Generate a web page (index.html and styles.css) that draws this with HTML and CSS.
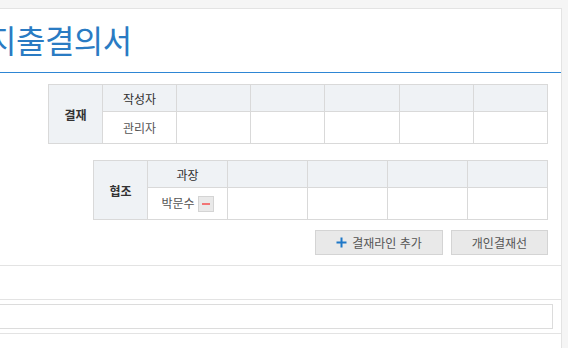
FILE: index.html
```html
<!DOCTYPE html>
<html lang="ko">

<head>
    <meta charset="UTF-8">
    <meta name="viewport" content="width=device-width, initial-scale=1.0">
    <title>지출결의서</title>
    <link rel="stylesheet" href="styles.css">
</head>

<body>

    <div class="page">
        <div class="panel">
            <div class="doc-head">
                <h1 class="doc-title">지출결의서</h1>
            </div>

            <!-- 결재 / 협조 라인 -->
            <div class="approval">
                <table class="sign-table sign-main">
                    <colgroup>
                        <col class="col-label">
                        <col span="6">
                    </colgroup>
                    <tr class="sign-head">
                        <th class="sign-label" rowspan="2">결재</th>
                        <th>작성자</th>
                        <th></th>
                        <th></th>
                        <th></th>
                        <th></th>
                        <th></th>
                    </tr>
                    <tr class="sign-body">
                        <td>관리자</td>
                        <td></td>
                        <td></td>
                        <td></td>
                        <td></td>
                        <td></td>
                    </tr>
                </table>

                <table class="sign-table sign-coop">
                    <colgroup>
                        <col class="col-label">
                        <col span="5">
                    </colgroup>
                    <tr class="sign-head">
                        <th class="sign-label" rowspan="2">협조</th>
                        <th>과장</th>
                        <th></th>
                        <th></th>
                        <th></th>
                        <th></th>
                    </tr>
                    <tr class="sign-body">
                        <td>박문수<button type="button" class="btn-remove" title="삭제"><span></span></button></td>
                        <td></td>
                        <td></td>
                        <td></td>
                        <td></td>
                    </tr>
                </table>

                <div class="sign-actions">
                    <button type="button" class="btn">
                        <svg class="icon-plus" width="11" height="11" viewBox="0 0 11 11">
                            <path d="M5.5 0.5v10M0.5 5.5h10" stroke="#1f78c8" stroke-width="2" fill="none"/>
                        </svg>
                        결재라인 추가
                    </button>
                    <button type="button" class="btn">개인결재선</button>
                </div>
            </div>

            <div class="form-row"></div>
            <div class="form-row form-row-field">
                <input type="text" class="field-input">
            </div>
            <div class="form-row"></div>
        </div>
    </div>

</body>

</html>
```

FILE: styles.css
```css
body {
    margin: 0;
    padding: 0;
    background-color: #f5f5f5;
    font-family: "Noto Sans CJK KR", "Noto Sans", sans-serif;
    font-size: 12px;
    color: #444;
}

.page {
    padding: 8px 6px 0 0;
    overflow: hidden;
}

.panel {
    margin-left: -60px;
    background-color: #fff;
    border: 1px solid #e3e3e3;
    border-bottom: none;
    height: 400px;
}

.doc-head {
    height: 63px;
    border-bottom: 1px solid #2e86d4;
}

.doc-title {
    margin: 0;
    padding: 9px 0 0 46px;
    font-size: 32px;
    font-weight: 400;
    line-height: 42px;
    color: #2a7bc3;
    letter-spacing: -0.5px;
}

.approval {
    padding: 11px 13px 10px 0;
    border-bottom: 1px solid #e3e3e3;
}

.sign-table {
    margin-left: auto;
    border-collapse: collapse;
    table-layout: fixed;
}

.sign-main {
    width: 500px;
}

.sign-coop {
    width: 455px;
    margin-top: 16px;
}

.col-label {
    width: 54px;
}

.sign-table th,
.sign-table td {
    border: 1px solid #d9d9d9;
    padding: 0;
    text-align: center;
}

.sign-head th {
    height: 26px;
    background-color: #eff2f5;
    font-weight: 400;
    color: #2f2f2f;
}

.sign-table .sign-label {
    font-weight: 700;
    color: #333;
}

.sign-body td {
    height: 31px;
    color: #555;
}

.btn-remove {
    width: 16px;
    height: 16px;
    margin-left: 3px;
    padding: 0;
    vertical-align: middle;
    position: relative;
    top: -1px;
    background-color: #e9e9e9;
    border: 1px solid #d4d4d4;
    cursor: pointer;
}

.btn-remove span {
    display: block;
    width: 8px;
    height: 2px;
    margin: 0 auto;
    background-color: #f27575;
}

.sign-actions {
    display: flex;
    justify-content: flex-end;
    gap: 8px;
    margin-top: 10px;
}

.btn {
    display: flex;
    align-items: center;
    gap: 5px;
    height: 25px;
    padding: 0 20px;
    background-color: #e9e9e9;
    border: 1px solid #d4d4d4;
    font-family: inherit;
    font-size: 12px;
    color: #555;
    cursor: pointer;
}

.btn:hover {
    background-color: #dedede;
}

.form-row {
    height: 33px;
    border-bottom: 1px solid #e3e3e3;
}

.form-row-field {
    height: auto;
    padding: 4px 8px 4px 0;
}

.field-input {
    display: block;
    box-sizing: border-box;
    width: 100%;
    height: 25px;
    border: 1px solid #dcdcdc;
    margin: 0;
}
```
